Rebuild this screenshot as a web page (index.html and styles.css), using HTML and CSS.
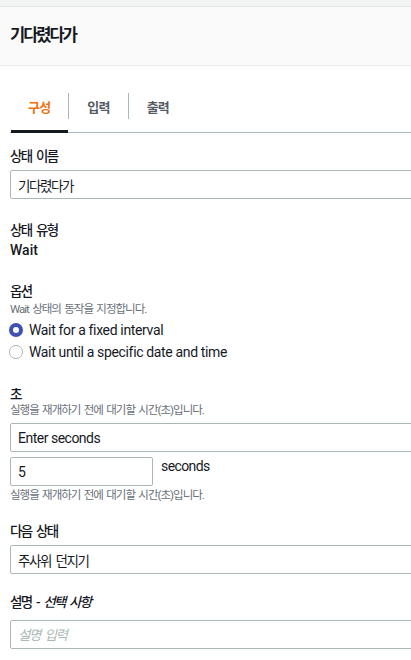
FILE: index.html
```html
<!DOCTYPE html>
<html lang="ko">
<head>
<meta charset="utf-8">
<title>기다렸다가</title>
<link rel="stylesheet" href="styles.css">
</head>
<body>
<div class="topbar"></div>
<header class="header">
  <h1 class="title">기다렸다가</h1>
</header>
<nav class="tabs">
  <a class="tab tab-active">구성</a>
  <span class="tab-sep"></span>
  <a class="tab">입력</a>
  <span class="tab-sep"></span>
  <a class="tab">출력</a>
</nav>
<form class="form">
  <div class="field">
    <label class="label">상태 이름</label>
    <input class="input" type="text" value="기다렸다가">
  </div>
  <div class="field">
    <div class="label label-flat">상태 유형</div>
    <div class="value">Wait</div>
  </div>
  <div class="field">
    <div class="label label-flat">옵션</div>
    <div class="desc">Wait 상태의 동작을 지정합니다.</div>
    <label class="radio-row radio-first"><input class="radio" type="radio" name="opt" checked><span>Wait for a fixed interval</span></label>
    <label class="radio-row"><input class="radio" type="radio" name="opt"><span>Wait until a specific date and time</span></label>
  </div>
  <div class="field field-close">
    <div class="label label-flat">초</div>
    <div class="desc desc-up">실행을 재개하기 전에 대기할 시간(초)입니다.</div>
    <input class="input input-latin" type="text" value="Enter seconds">
    <div class="seconds-row">
      <input class="input input-small input-latin" type="text" value="5">
      <span class="unit">seconds</span>
    </div>
    <div class="desc desc-after">실행을 재개하기 전에 대기할 시간(초)입니다.</div>
  </div>
  <div class="field field-close">
    <label class="label">다음 상태</label>
    <input class="input" type="text" value="주사위 던지기">
  </div>
  <div class="field">
    <label class="label label-loose">설명 - <em class="opt">선택 사항</em></label>
    <input class="input" type="text" placeholder="설명 입력">
  </div>
</form>
</body>
</html>
```

FILE: styles.css
```css
html, body {
  margin: 0;
  padding: 0;
  background: #ffffff;
  overflow: hidden;
}

body {
  font-family: Roboto, "Noto Sans CJK KR", sans-serif;
  color: #16191f;
  font-size: 14px;
}

.topbar {
  height: 6px;
  background: #f2f3f3;
  border-bottom: 1px solid #e3e6e6;
}

.header {
  height: 58px;
  background: #fafafa;
  border-bottom: 1px solid #eaeded;
  display: flex;
  align-items: center;
  padding-left: 10px;
}

.title {
  margin: 0;
  font-size: 16.5px;
  font-weight: 700;
  letter-spacing: -2px;
  line-height: 20px;
}

.tabs {
  display: flex;
  align-items: center;
  margin: 14px 0 0 10px;
  border-bottom: 1px solid #aab7b8;
  height: 52px;
}

.tab {
  position: relative;
  height: 52px;
  display: flex;
  align-items: center;
  padding: 0 18px;
  font-size: 13px;
  font-weight: 700;
  color: #545b64;
  letter-spacing: -0.8px;
}

.tab-active {
  color: #ec7211;
}

.tab-active::after {
  content: "";
  position: absolute;
  left: 1px;
  right: 0;
  bottom: -1px;
  height: 3px;
  background: #16191f;
}

.tab-sep {
  width: 1px;
  height: 26px;
  background: #aab7b8;
}

.form {
  padding: 13px 0 0 10px;
}

.field {
  display: flex;
  flex-direction: column;
  align-items: flex-start;
  margin-bottom: 21px;
}

.field-close {
  margin-bottom: 18px;
}

.label {
  font-size: 13.5px;
  font-weight: 500;
  line-height: 20px;
  margin-bottom: 4px;
  letter-spacing: -1.6px;
  word-spacing: 2.5px;
}

.label-flat {
  margin-bottom: 0;
}

.label-loose {
  margin-bottom: 8px;
}

.opt {
  font-style: italic;
}

.value {
  line-height: 20px;
  font-size: 14px;
  font-weight: 500;
}

.desc {
  font-size: 11.5px;
  line-height: 16px;
  color: #687078;
  letter-spacing: -1px;
  word-spacing: 1.5px;
}

.desc-up {
  margin-top: -2px;
  margin-bottom: 5px;
}

.desc-after {
  margin-top: 1px;
}

.input {
  box-sizing: border-box;
  width: 440px;
  height: 29px;
  border: 1px solid #aab7b8;
  border-radius: 2px;
  padding: 0 7px;
  font-family: Roboto, "Noto Sans CJK KR", sans-serif;
  font-size: 13.5px;
  color: #16191f;
  background: #ffffff;
  outline: none;
  letter-spacing: -1.4px;
  word-spacing: 2.5px;
}

.input-latin {
  font-size: 14px;
  letter-spacing: -0.5px;
  word-spacing: 0;
}

.input::placeholder {
  color: #aab7b8;
  font-style: italic;
}

.seconds-row {
  display: flex;
  align-items: flex-start;
  margin-top: 5px;
  gap: 8px;
}

.input-small {
  width: 143px;
}

.unit {
  line-height: 18px;
  font-size: 14px;
  letter-spacing: -0.6px;
}

.radio-row {
  display: flex;
  align-items: center;
  height: 22px;
  margin-left: -1px;
  gap: 6px;
  font-size: 14px;
  letter-spacing: -0.35px;
}

.radio-first {
  margin-top: 2px;
}

.radio {
  appearance: none;
  -webkit-appearance: none;
  box-sizing: border-box;
  width: 14px;
  height: 14px;
  margin: 0;
  border-radius: 50%;
  border: 1px solid #aab7b8;
  background: #ffffff;
}

.radio:checked {
  border: 4.5px solid #3f51b5;
}
```
